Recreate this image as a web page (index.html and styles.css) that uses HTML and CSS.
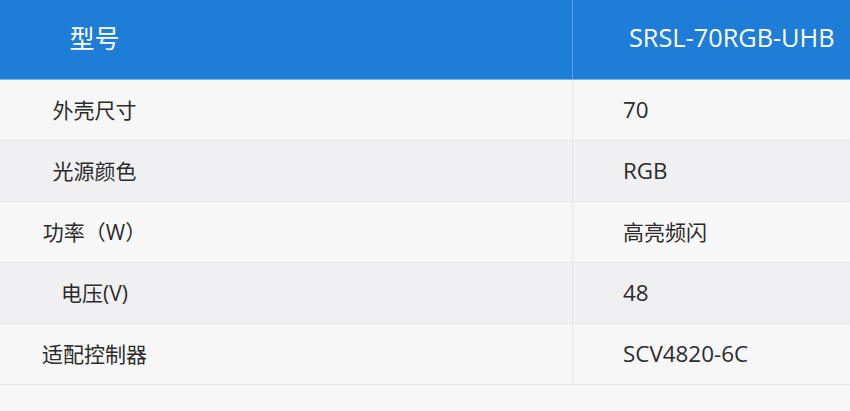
FILE: index.html
```html
<!DOCTYPE html>
<html lang="zh">
<head>
<meta charset="utf-8">
<link rel="stylesheet" href="styles.css">
</head>
<body>
<div class="spec">
  <div class="row head">
    <div class="cell name">型号</div>
    <div class="cell val en">SRSL-70RGB-UHB</div>
  </div>
  <div class="row odd">
    <div class="cell name">外壳尺寸</div>
    <div class="cell val en">70</div>
  </div>
  <div class="row even">
    <div class="cell name">光源颜色</div>
    <div class="cell val en">RGB</div>
  </div>
  <div class="row odd">
    <div class="cell name">功率（W）</div>
    <div class="cell val">高亮频闪</div>
  </div>
  <div class="row even">
    <div class="cell name">电压(V)</div>
    <div class="cell val en">48</div>
  </div>
  <div class="row odd">
    <div class="cell name">适配控制器</div>
    <div class="cell val en">SCV4820-6C</div>
  </div>
</div>
</body>
</html>
```
FILE: styles.css
```css
html, body {
  margin: 0;
  padding: 0;
  background: #f7f7f7;
}
body {
  font-family: "Open Sans", "Noto Sans CJK SC", sans-serif;
  color: #2b2b2b;
  width: 850px;
  height: 411px;
  overflow: hidden;
}
.spec {
  display: flex;
  flex-direction: column;
}
.row {
  display: grid;
  grid-template-columns: 573px 1fr;
  height: 60px;
  border-bottom: 1px solid #e6e6e8;
  font-size: 21px;
}
.row.odd { background: #f7f7f7; }
.row.even { background: #f0f0f2; }
.cell {
  display: flex;
  align-items: center;
  padding-bottom: 2px;
}
.cell.name {
  justify-content: center;
  padding-right: 383px;
  border-right: 1px solid #e6e6e8;
}
.cell.val {
  padding-left: 50px;
}
.cell.val.en {
  font-size: 22.4px;
}
.row.head {
  height: 79px;
  background: #1d7dd7;
  color: #ffffff;
  font-size: 25px;
  border-bottom: 1px solid #7fb6ec;
}
.row.head .cell {
  padding-bottom: 6px;
}
.row.head .cell.name {
  border-right-color: #5fa3e6;
}
.row.head .cell.val {
  padding-left: 56px;
  font-size: 25.3px;
}
```
